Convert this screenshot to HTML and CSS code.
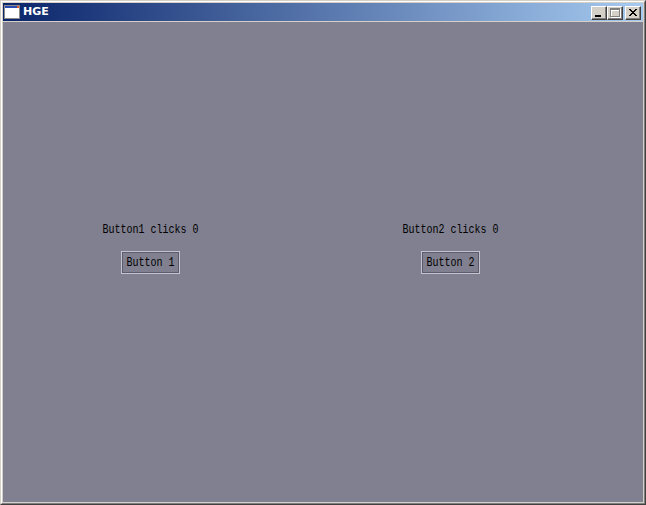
FILE: index.html
```html
<!DOCTYPE html>
<html>
<head>
<meta charset="utf-8">
<link rel="stylesheet" href="styles.css">
</head>
<body>
<div class="window">
  <div class="frame">
    <div class="titlebar">
      <svg class="appicon" width="16" height="14" viewBox="0 0 16 14">
        <rect x="0.5" y="0.5" width="15" height="13" fill="#fff" stroke="#8c8c8c"/>
        <rect x="1" y="1" width="14" height="2" fill="#2a4cb0"/>
        <rect x="13" y="1" width="2" height="2" fill="#e05a28"/>
      </svg>
      <span class="title">HGE</span>
      <div class="controls">
        <div class="cbtn">
          <svg width="16" height="14" viewBox="0 0 16 14"><rect x="4" y="9" width="6" height="2" fill="#000"/></svg>
        </div>
        <div class="cbtn">
          <svg width="16" height="14" viewBox="0 0 16 14">
            <rect x="4.5" y="3.5" width="9" height="8" fill="none" stroke="#fff"/>
            <rect x="4" y="3" width="9" height="2" fill="#fff"/>
            <rect x="3.5" y="2.5" width="9" height="8" fill="none" stroke="#808080"/>
            <rect x="3" y="2" width="10" height="2" fill="#808080"/>
          </svg>
        </div>
        <div class="cbtn close">
          <svg width="16" height="14" viewBox="0 0 16 14">
            <path d="M4 3 L11 10 M5 3 L12 10 M11 3 L4 10 M12 3 L5 10" stroke="#000" stroke-width="1" fill="none"/>
          </svg>
        </div>
      </div>
    </div>
    <div class="client">
      <div class="col">
        <div class="label"><span class="txt">Button1 clicks 0</span></div>
        <div class="btn"><span class="txt">Button 1</span></div>
      </div>
      <div class="col">
        <div class="label"><span class="txt">Button2 clicks 0</span></div>
        <div class="btn"><span class="txt">Button 2</span></div>
      </div>
    </div>
  </div>
</div>
</body>
</html>
```
FILE: styles.css
```css
html, body { margin: 0; padding: 0; background: #d4d0c8; }
.window {
  width: 646px; height: 505px; box-sizing: border-box;
  border-top: 1px solid #d4d0c8; border-left: 1px solid #d4d0c8;
  border-right: 1px solid #404040; border-bottom: 1px solid #404040;
}
.frame {
  height: 100%; box-sizing: border-box;
  border-top: 1px solid #fff; border-left: 1px solid #fff;
  border-right: 1px solid #808080; border-bottom: 1px solid #808080;
  padding: 1px; background: #d4d0c8;
  display: flex; flex-direction: column;
}
.titlebar {
  height: 18px; margin-bottom: 1px;
  background: linear-gradient(to right, #0a246a, #a6caf0);
  display: flex; align-items: center;
}
.appicon { margin-left: 1px; margin-right: 3px; }
.title {
  color: #fff; font-family: "DejaVu Sans", sans-serif; font-weight: bold;
  font-size: 11px; line-height: 18px;
}
.controls { margin-left: auto; display: flex; margin-right: 2px; margin-top: 1px; }
.cbtn {
  width: 16px; height: 14px; box-sizing: border-box; background: #d4d0c8;
  border-top: 1px solid #fff; border-left: 1px solid #fff;
  border-right: 1px solid #404040; border-bottom: 1px solid #404040;
  box-shadow: inset -1px -1px 0 #808080;
  position: relative; overflow: hidden;
}
.cbtn svg { position: absolute; left: -1px; top: -1px; }
.cbtn.close { margin-left: 2px; }
.client {
  width: 640px; height: 480px; background: #808090;
  display: grid; grid-template-columns: 295px 295px; column-gap: 5px;
  align-content: start;
  font-family: "Liberation Mono", monospace; font-size: 10px; color: #000;
}
.col { display: flex; flex-direction: column; align-items: center; padding-top: 201px; }
.label { line-height: 13px; }
.txt { display: inline-block; transform: scaleY(1.25); }
.btn {
  margin-top: 15px; width: 59px; height: 23px; box-sizing: border-box;
  border: 1px solid #c4c4d0; box-shadow: inset 0 0 0 1px #5c5c6c;
  display: flex; align-items: center; justify-content: center; line-height: 13px;
}
```
